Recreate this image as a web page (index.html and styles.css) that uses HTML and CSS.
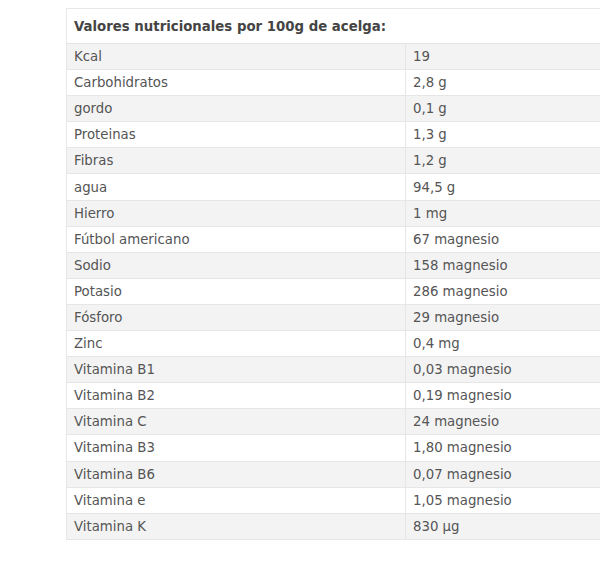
FILE: index.html
```html
<!DOCTYPE html>
<html lang="es">
<head>
<meta charset="utf-8">
<link rel="stylesheet" href="styles.css">
</head>
<body>
<div class="page">
<div class="clip">
<table class="nutri">
<thead>
<tr><th colspan="2">Valores nutricionales por 100g de acelga:</th></tr>
</thead>
<tbody>
<tr><td class="name">Kcal</td><td>19</td></tr>
<tr><td class="name">Carbohidratos</td><td>2,8 g</td></tr>
<tr><td class="name">gordo</td><td>0,1 g</td></tr>
<tr><td class="name">Proteinas</td><td>1,3 g</td></tr>
<tr><td class="name">Fibras</td><td>1,2 g</td></tr>
<tr><td class="name">agua</td><td>94,5 g</td></tr>
<tr><td class="name">Hierro</td><td>1 mg</td></tr>
<tr><td class="name">Fútbol americano</td><td>67 magnesio</td></tr>
<tr><td class="name">Sodio</td><td>158 magnesio</td></tr>
<tr><td class="name">Potasio</td><td>286 magnesio</td></tr>
<tr><td class="name">Fósforo</td><td>29 magnesio</td></tr>
<tr><td class="name">Zinc</td><td>0,4 mg</td></tr>
<tr><td class="name">Vitamina B1</td><td>0,03 magnesio</td></tr>
<tr><td class="name">Vitamina B2</td><td>0,19 magnesio</td></tr>
<tr><td class="name">Vitamina C</td><td>24 magnesio</td></tr>
<tr><td class="name">Vitamina B3</td><td>1,80 magnesio</td></tr>
<tr><td class="name">Vitamina B6</td><td>0,07 magnesio</td></tr>
<tr><td class="name">Vitamina e</td><td>1,05 magnesio</td></tr>
<tr><td class="name">Vitamina K</td><td>830 µg</td></tr>
</tbody>
</table>
</div>
</div>
</body>
</html>
```
FILE: styles.css
```css
html, body {
  margin: 0;
  padding: 0;
  background: #fff;
  overflow: hidden;
}
.page {
  padding: 8px 0 0 66px;
  width: 600px;
  box-sizing: border-box;
}
.clip {
  width: 534px;
  overflow: hidden;
}
.nutri {
  border-collapse: collapse;
  width: 560px;
  font-family: "DejaVu Sans", Verdana, sans-serif;
  font-size: 13.3px;
  color: #555;
  border-top: 1px solid #e8e8e8;
  border-left: 1px solid #e8e8e8;
}
.nutri th {
  text-align: left;
  font-weight: bold;
  color: #444;
  height: 34px;
  padding: 0 7px;
  border-bottom: 1px solid #e4e4e4;
  background: #fff;
}
.nutri td {
  height: 25.1px;
  padding: 0 7px;
  border-bottom: 1px solid #e6e6e6;
  vertical-align: middle;
}
.nutri td.name {
  width: 324px;
  border-right: 1px solid #e6e6e6;
}
.nutri tbody tr:nth-child(odd) td {
  background: #f3f3f3;
}
.nutri tbody tr:nth-child(even) td {
  background: #fff;
}
```
